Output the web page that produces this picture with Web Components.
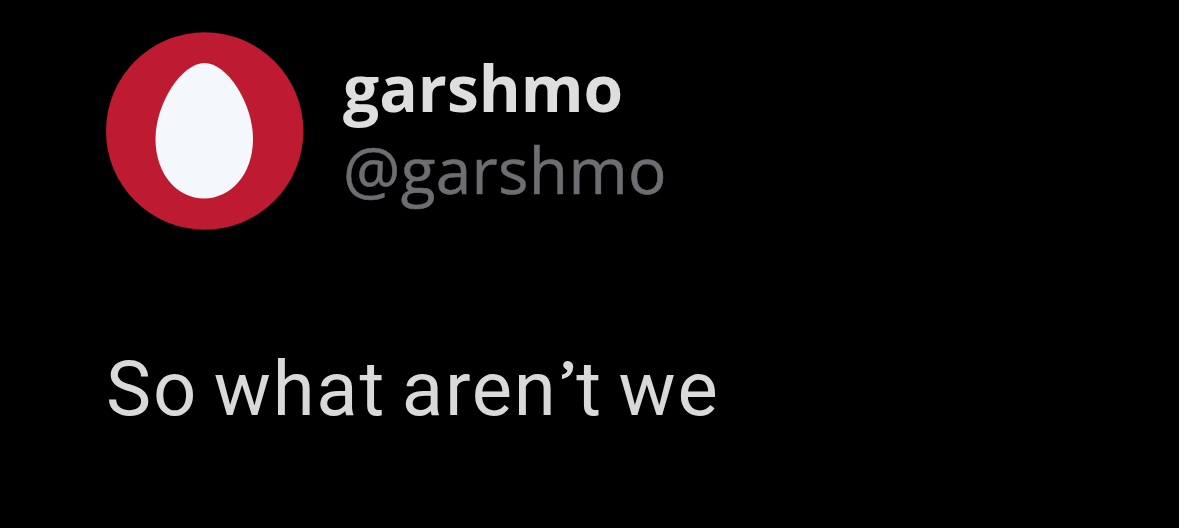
<!DOCTYPE html>
<html lang="en">
<head>
<meta charset="utf-8">
<title>garshmo</title>
<style>
    body{
        margin: 0;
        background: #000;
    }
    .apostrophe{
        font-family: 'Liberation Serif', serif;
        font-size: 62px;
        letter-spacing: -2px;
        line-height: 0;
        vertical-align: 13px;
        -webkit-text-stroke: 2px #d9d9d9;
    }
</style>
</head>
<body>
<post-card>
    <egg-avatar slot="avatar"></egg-avatar>
    <user-name slot="user" name="garshmo" handle="@garshmo"></user-name>
    <post-text>So what aren<span class="apostrophe">’</span>t we</post-text>
</post-card>
<script>
class EggAvatar extends HTMLElement{
    constructor(){
        super()
        this._shadowRoot = this.attachShadow({mode: 'open'})
    }
    connectedCallback(){
        this._shadowRoot.innerHTML = `
        <style>
            :host{
                display: block;
                flex: none;
                width: 198px;
                height: 198px;
            }
            svg{
                display: block;
            }
        </style>
        <svg width="198" height="198" viewBox="0 0 198 198">
            <circle cx="98.7" cy="99" r="98.7" fill="#be1b32"/>
            <path fill="#f4f8fc" d="M98.5 31C121 31 147 71 147 107C147 143 124 166.5 98 166.5C72 166.5 49.5 143 49.5 107C49.5 71 76 31 98.5 31Z"/>
        </svg>
        `
    }
}
window.customElements.define('egg-avatar', EggAvatar)

class UserName extends HTMLElement{
    constructor(){
        super()
        this._shadowRoot = this.attachShadow({mode: 'open'})
    }
    connectedCallback(){
        this._shadowRoot.innerHTML = `
        <style>
            :host{
                display: flex;
                flex-direction: column;
                padding-bottom: 4px;
                font-family: 'Open Sans', sans-serif;
                font-size: 64px;
                line-height: 82px;
                white-space: nowrap;
            }
            .name{
                color: #dedede;
                font-weight: 700;
            }
            .handle{
                color: #6d6e72;
                letter-spacing: 0.3px;
                -webkit-text-stroke: 0.5px #6d6e72;
            }
        </style>
        <span class="name">${this.getAttribute('name')}</span>
        <span class="handle">${this.getAttribute('handle')}</span>
        `
    }
}
window.customElements.define('user-name', UserName)

class PostText extends HTMLElement{
    constructor(){
        super()
        this._shadowRoot = this.attachShadow({mode: 'open'})
    }
    connectedCallback(){
        this._shadowRoot.innerHTML = `
        <style>
            :host{
                display: block;
                color: #d9d9d9;
                font-family: Roboto, sans-serif;
                font-size: 76px;
                line-height: 90px;
                letter-spacing: 1.8px;
                word-spacing: -5px;
                white-space: nowrap;
            }
        </style>
        <slot></slot>
        `
    }
}
window.customElements.define('post-text', PostText)

class PostCard extends HTMLElement{
    constructor(){
        super()
        this._shadowRoot = this.attachShadow({mode: 'open'})
    }
    connectedCallback(){
        this._shadowRoot.innerHTML = `
        <style>
            :host{
                display: flex;
                flex-direction: column;
                gap: 114px;
                box-sizing: border-box;
                height: 528px;
                padding: 32px 105px 0 106px;
                overflow: hidden;
                background: #000;
            }
            header{
                display: flex;
                align-items: center;
                gap: 39px;
                height: 198px;
            }
        </style>
        <header>
            <slot name="avatar"></slot>
            <slot name="user"></slot>
        </header>
        <slot></slot>
        `
    }
}
window.customElements.define('post-card', PostCard)
</script>
</body>
</html>
